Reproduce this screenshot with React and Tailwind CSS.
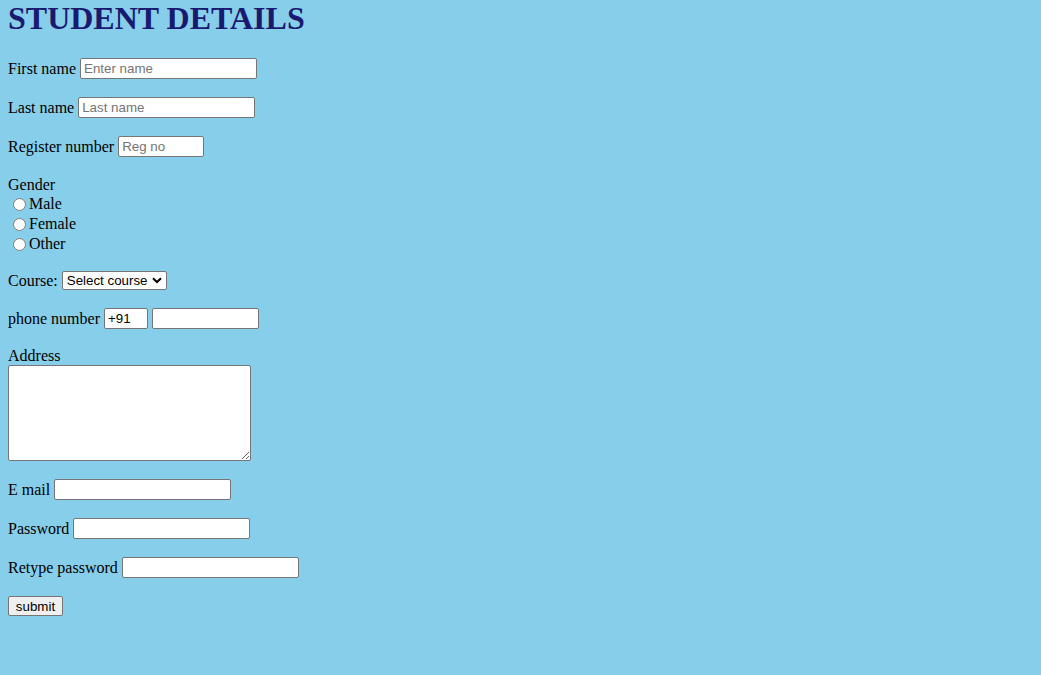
import React from 'react';

const serif = { fontFamily: '"Liberation Serif", "Times New Roman", serif' };

const inputCls =
  "h-[21px] border border-[#767676] rounded-[2px] bg-white px-[3px] text-[13.33px] text-black placeholder:text-[#757575] font-['Liberation_Sans',Arial,sans-serif] outline-none";

const Field = ({ label, width, placeholder, type = 'text', className = '' }) => (
  <div className={`flex items-center gap-[4px] h-[21px] ${className}`}>
    <span className="text-[16px] leading-[18px]">{label}</span>
    <input type={type} placeholder={placeholder} className={`${inputCls} ${width}`} />
  </div>
);

const Radio = ({ label }) => (
  <label className="flex items-center h-[20px]">
    <input type="radio" name="gender" className="ml-[5px] mr-[3px] w-[13px] h-[13px]" />
    <span className="text-[16px] leading-[18px]">{label}</span>
  </label>
);

export default function App() {
  return (
    <div className="min-h-screen bg-[#87CEEB] text-black px-2" style={serif}>
      <h1 className="text-[32px] leading-[37px] font-bold text-[#191970]">STUDENT DETAILS</h1>

      <Field label="First name" width="w-[177px]" placeholder="Enter name" className="mt-[21px]" />
      <Field label="Last name" width="w-[177px]" placeholder="Last name" className="mt-[18px]" />
      <Field label="Register number" width="w-[86px]" placeholder="Reg no" className="mt-[18px]" />

      <div className="mt-[19px]">
        <div className="text-[16px] leading-[18px]">Gender</div>
        <Radio label="Male" />
        <Radio label="Female" />
        <Radio label="Other" />
      </div>

      <div className="flex items-center gap-[4px] h-[19px] mt-[17px]">
        <span className="text-[16px] leading-[18px]">Course:</span>
        <div className="relative flex">
          <select className="appearance-none h-[19px] w-[105px] border border-[#767676] rounded-[2px] bg-white pl-[4px] text-[13.33px] leading-[15px] font-['Liberation_Sans',Arial,sans-serif] outline-none">
            <option>Select course</option>
            <option>B.E</option>
            <option>B.Tech</option>
          </select>
          <svg className="absolute right-[5px] top-[6px] pointer-events-none" width="10" height="7" viewBox="0 0 10 7">
            <path d="M1 1.2 L5 5 L9 1.2" fill="none" stroke="black" strokeWidth="2" />
          </svg>
        </div>
      </div>

      <div className="flex items-center gap-[4px] h-[21px] mt-[18px]">
        <span className="text-[16px] leading-[18px]">phone number</span>
        <input type="text" defaultValue="+91" className={`${inputCls} w-[44px]`} />
        <input type="tel" className={`${inputCls} w-[107px]`} />
      </div>

      <div className="mt-[18px] text-[16px] leading-[18px]">Address</div>
      <textarea className="block w-[243px] h-[96px] border border-[#767676] rounded-[2px] bg-white outline-none resize" />

      <Field label="E mail" width="w-[177px]" type="email" className="mt-[18px]" />
      <Field label="Password" width="w-[177px]" type="password" className="mt-[18px]" />
      <Field label="Retype password" width="w-[177px]" type="password" className="mt-[18px]" />

      <div className="flex mt-[18px]">
        <button className="h-[20px] w-[55px] border border-[#767676] rounded-[2px] bg-[#efefef] text-[13.33px] leading-[15px] font-['Liberation_Sans',Arial,sans-serif]">
          submit
        </button>
      </div>
    </div>
  );
}
